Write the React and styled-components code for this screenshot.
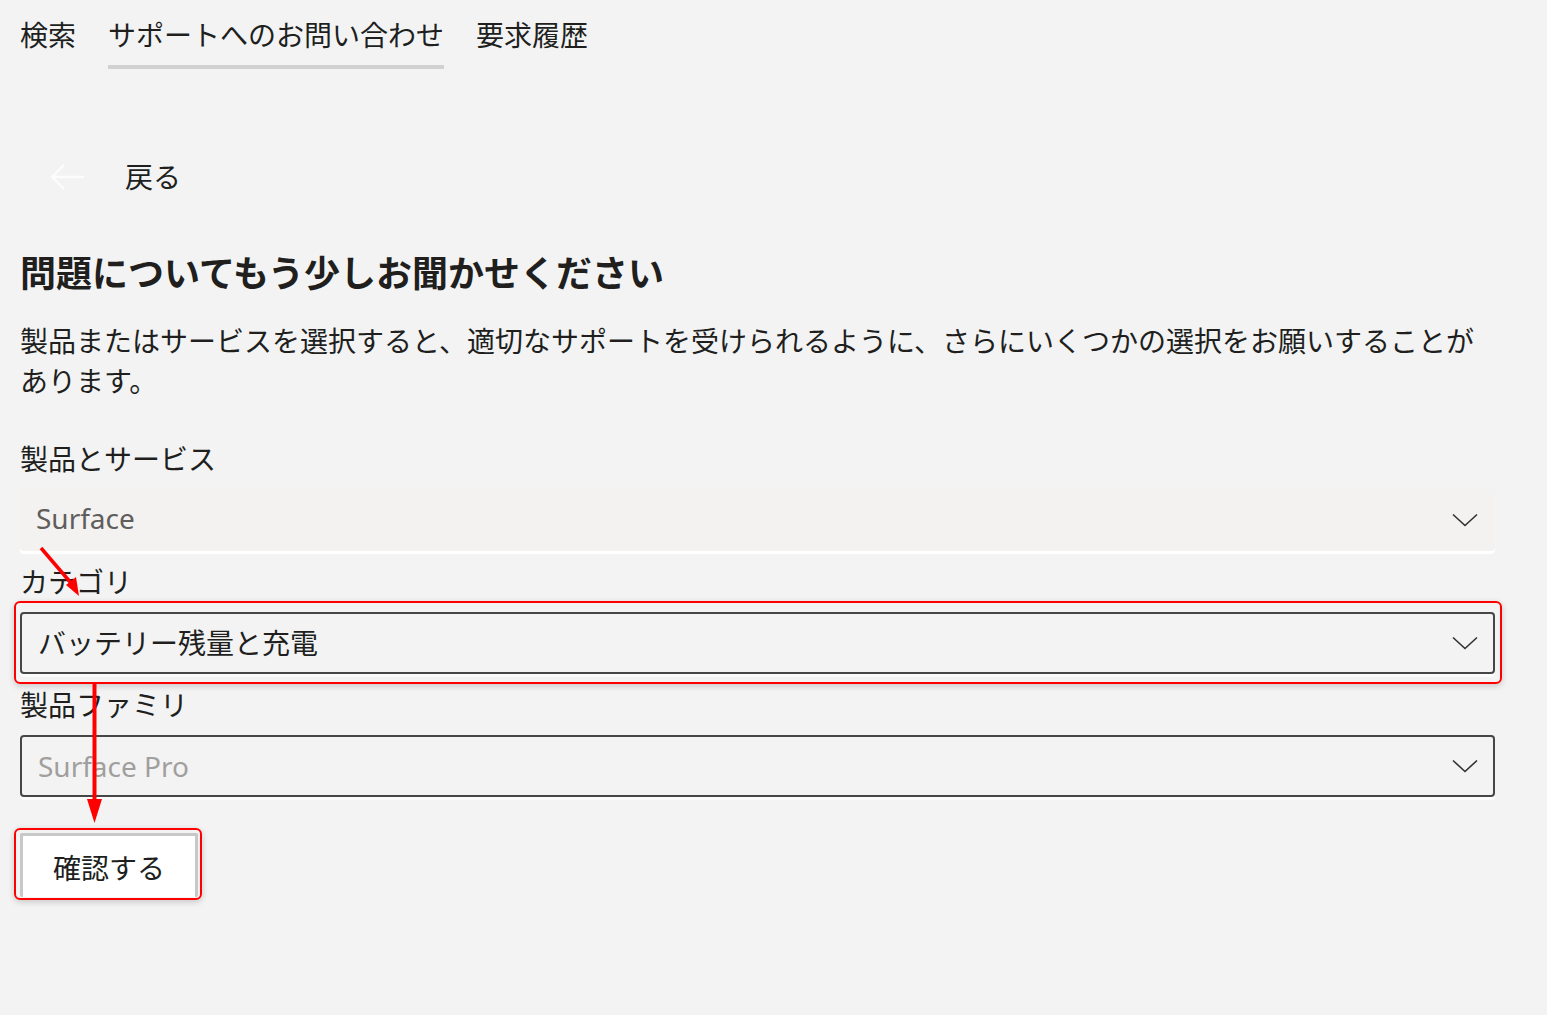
import React from "react";
import styled, { createGlobalStyle } from "styled-components";

const GlobalStyle = createGlobalStyle`
  html, body {
    margin: 0;
    padding: 0;
    background: #f3f3f3;
  }
  body {
    font-family: "Noto Sans", "Noto Sans CJK JP", sans-serif;
    color: #201f1e;
  }
`;

const Chevron = () => (
  <svg width="26" height="14" viewBox="0 0 26 14" fill="none">
    <path d="M1 1.5 L13 12.5 L25 1.5" stroke="#323130" strokeWidth="1.6" />
  </svg>
);

const BackArrow = () => (
  <svg width="36" height="28" viewBox="0 0 36 28" fill="none">
    <path d="M35 14 H3 M15 2 L3 14 L15 26" stroke="#fcfcfc" strokeWidth="2.4" />
  </svg>
);

// red annotation arrows drawn on top of the form
const Annotations = () => (
  <Overlay width="1547" height="1015" viewBox="0 0 1547 1015">
    <line x1="41" y1="548" x2="71" y2="583" stroke="#ff0000" strokeWidth="3.5" />
    <polygon points="79,596 66,585 76,577" fill="#ff0000" />
    <line x1="94.5" y1="684" x2="94.5" y2="802" stroke="#ff0000" strokeWidth="4" />
    <polygon points="87,799 102,799 94.5,823" fill="#ff0000" />
  </Overlay>
);

const fields = [
  { label: "製品とサービス", value: "Surface", variant: "disabled" },
  { label: "カテゴリ", value: "バッテリー残量と充電", variant: "active", marked: true },
  { label: "製品ファミリ", value: "Surface Pro", variant: "placeholder" },
];

const App = () => (
  <Page>
    <GlobalStyle />
    <Tabs>
      <Tab>検索</Tab>
      <Tab active>サポートへのお問い合わせ</Tab>
      <Tab>要求履歴</Tab>
    </Tabs>

    <Content>
      <BackButton>
        <BackArrow />
        <span>戻る</span>
      </BackButton>

      <Heading>問題についてもう少しお聞かせください</Heading>
      <Intro>
        製品またはサービスを選択すると、適切なサポートを受けられるように、さらにいくつかの選択をお願いすることがあります。
      </Intro>

      <Form>
        {fields.map((f) => (
          <Field key={f.label}>
            <Label>{f.label}</Label>
            <Marked marked={f.marked}>
              <Select variant={f.variant}>
                <span>{f.value}</span>
                <Chevron />
              </Select>
            </Marked>
          </Field>
        ))}
      </Form>

      <ButtonMark>
        <ConfirmButton>確認する</ConfirmButton>
      </ButtonMark>
    </Content>

    <Annotations />
  </Page>
);

const Page = styled.div`
  position: relative;
  min-height: 1015px;
  overflow: hidden;
`;

const Overlay = styled.svg`
  position: absolute;
  left: 0;
  top: 0;
  pointer-events: none;
`;

const Tabs = styled.nav`
  display: flex;
  gap: 32px;
  padding: 0 20px;
`;

const Tab = styled.div`
  font-size: 28px;
  line-height: 40px;
  padding: 15px 0 10px;
  border-bottom: 4px solid ${(p) => (p.active ? "#d1d1d1" : "transparent")};
  color: #201f1e;
  white-space: nowrap;
`;

const Content = styled.main`
  width: 1475px;
  padding: 88px 0 0 20px;
`;

const BackButton = styled.div`
  display: flex;
  align-items: center;
  gap: 40px;
  padding-left: 29px;
  font-size: 28px;
  line-height: 40px;
`;

const Heading = styled.h1`
  margin: 53px 0 0;
  font-size: 36px;
  line-height: 48px;
  font-weight: 700;
`;

const Intro = styled.p`
  margin: 23px 0 0;
  font-size: 28px;
  line-height: 40px;
`;

const Form = styled.div`
  display: flex;
  flex-direction: column;
  gap: 11px;
  margin-top: 38px;
`;

const Field = styled.div``;

const Label = styled.div`
  font-size: 28px;
  line-height: 40px;
`;

const Marked = styled.div`
  position: relative;
  margin-top: 10px;
  &::after {
    content: "";
    display: ${(p) => (p.marked ? "block" : "none")};
    position: absolute;
    left: -6px;
    right: -7px;
    top: -11px;
    bottom: -10px;
    border: 2px solid #ff0000;
    border-radius: 6px;
    box-shadow: 0 2px 6px rgba(0, 0, 0, 0.18);
    pointer-events: none;
  }
`;

const Select = styled.div`
  box-sizing: border-box;
  height: 62px;
  display: flex;
  align-items: center;
  justify-content: space-between;
  padding: 0 15px 0 16px;
  border: 2px solid ${(p) => (p.variant === "disabled" ? "#f3f2f1" : "#464646")};
  border-radius: 4px;
  background: ${(p) => (p.variant === "disabled" ? "#f3f2f1" : "#f3f3f3")};
  box-shadow: 0 3px 1px ${(p) => (p.variant === "disabled" ? "#ffffff" : "rgba(255,255,255,0.7)")};
  font-size: 28px;
  line-height: 40px;
  color: ${(p) =>
    p.variant === "disabled" ? "#605e5c" : p.variant === "placeholder" ? "#a19f9d" : "#201f1e"};
  & > span {
    margin-left: ${(p) => (p.variant === "disabled" ? "-2px" : "0")};
    margin-top: ${(p) => (p.variant === "disabled" ? "-4px" : "0")};
  }
`;

const ButtonMark = styled.div`
  position: relative;
  display: inline-block;
  margin-top: 36px;
  &::after {
    content: "";
    position: absolute;
    left: -6px;
    right: -4px;
    top: -5px;
    bottom: -3px;
    border: 2px solid #ff0000;
    border-radius: 6px;
    box-shadow: 0 2px 6px rgba(0, 0, 0, 0.18);
    pointer-events: none;
  }
`;

const ConfirmButton = styled.button`
  box-sizing: border-box;
  width: 178px;
  height: 64px;
  display: flex;
  align-items: center;
  justify-content: center;
  background: #ffffff;
  border: 3px solid #c8c8c8;
  border-bottom: none;
  border-radius: 2px;
  font-family: "Noto Sans", "Noto Sans CJK JP", sans-serif;
  font-size: 28px;
  color: #201f1e;
  padding: 0;
`;

export default App;
